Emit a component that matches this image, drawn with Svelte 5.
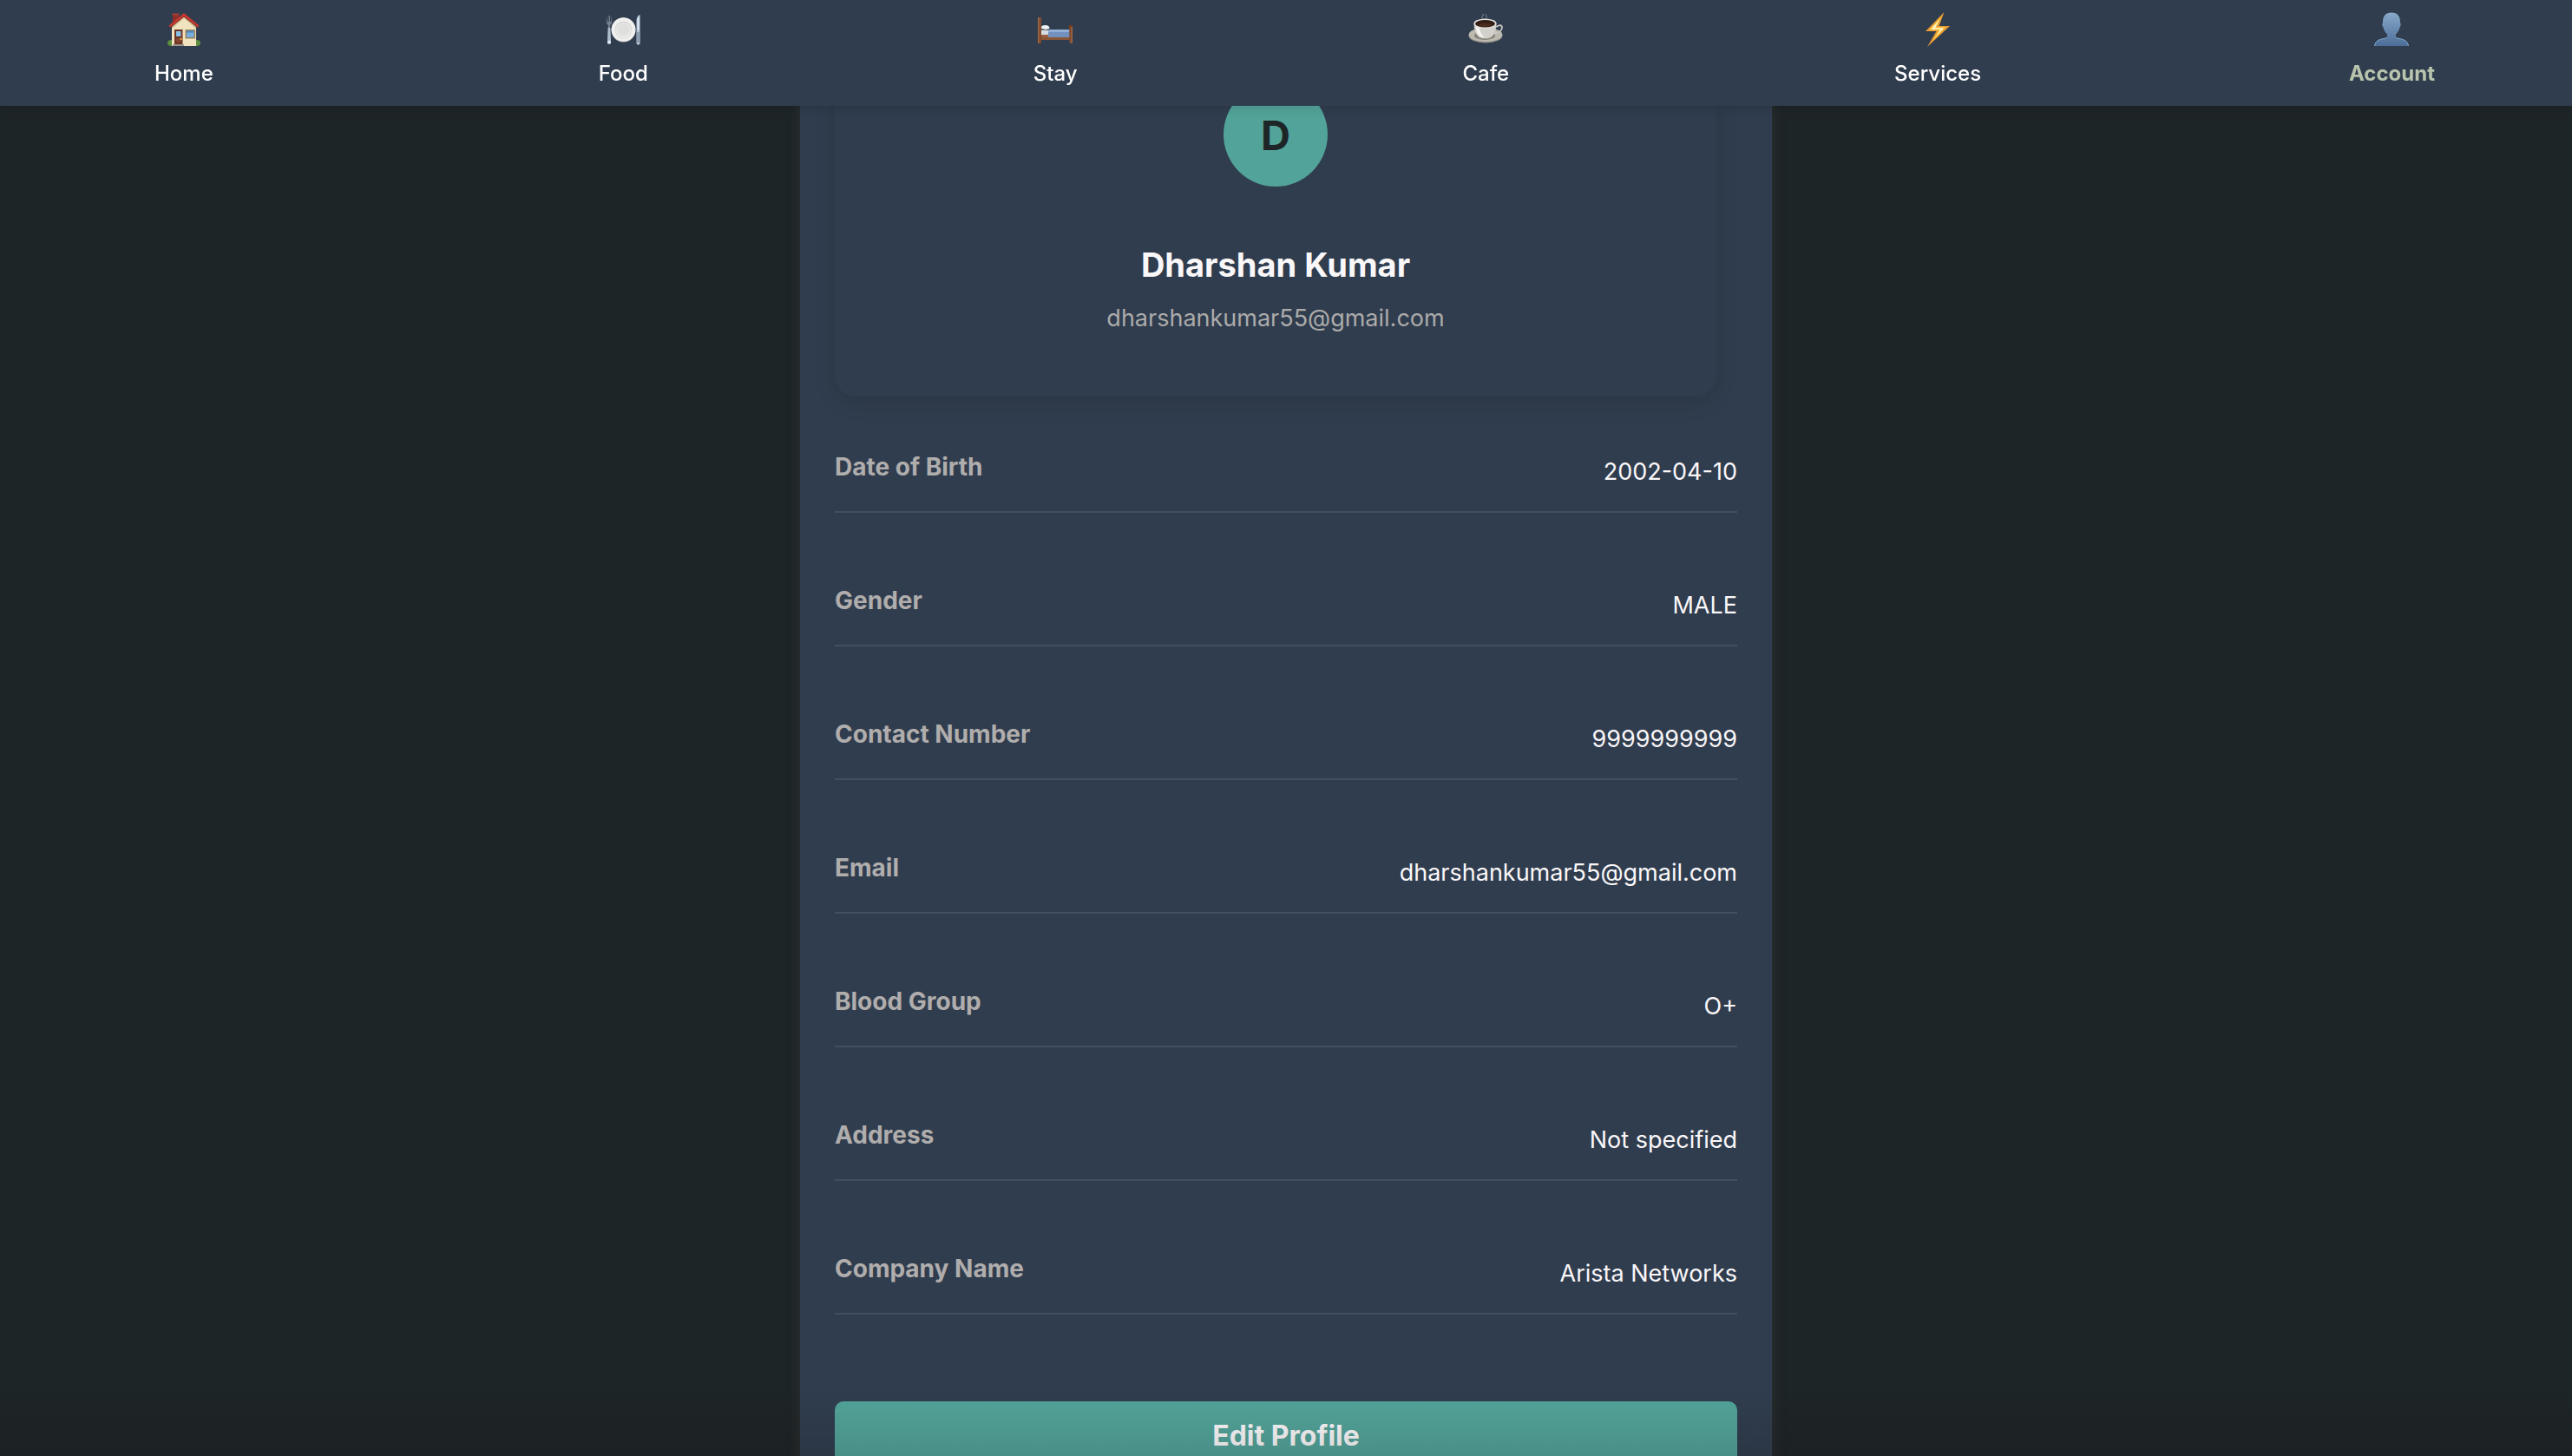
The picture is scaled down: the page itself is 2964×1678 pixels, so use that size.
<script>
  const nav = [
    { id: 'home', label: 'Home' },
    { id: 'food', label: 'Food' },
    { id: 'stay', label: 'Stay' },
    { id: 'cafe', label: 'Cafe' },
    { id: 'services', label: 'Services' },
    { id: 'account', label: 'Account', active: true }
  ];

  const user = { name: 'Dharshan Kumar', email: 'dharshankumar55@gmail.com' };

  const details = [
    ['Date of Birth', '2002-04-10'],
    ['Gender', 'MALE'],
    ['Contact Number', '9999999999'],
    ['Email', user.email],
    ['Blood Group', 'O+'],
    ['Address', 'Not specified'],
    ['Company Name', 'Arista Networks']
  ];
</script>

{#snippet icon(id)}
  <svg class="icon" viewBox="0 0 40 40" aria-hidden="true">
    {#if id === 'home'}
      <path d="M7 2h7v9l-7 6z" fill="#8f2f2a" />
      <path d="M6.500 1.500h8v2h-8z" fill="#a84038" />
      <ellipse cx="5.500" cy="35.500" rx="4.500" ry="3.500" fill="#5f8f3e" />
      <ellipse cx="34.500" cy="35.500" rx="4.500" ry="3.500" fill="#5f8f3e" />
      <path d="M6 17 20 4l14 13v22H6z" fill="#f1e3bf" />
      <path d="M6 17 20 4l14 13v2L20 7 6 19z" fill="#c9b68c" />
      <path d="M2.500 15.500 20 1l17.500 14.500-1.500 2L20 5 4 17.500z" fill="#c8382f" />
      <path d="M4 17.500 20 5l16 12.500" fill="none" stroke="#7c2620" stroke-width="1" />
      <path d="M7 37h13v2H7z" fill="#9b948a" />
      <path d="M9 20h9.500v17H9z" fill="#6e3423" />
      <path d="M11 22h5.500v6H11z" fill="#86bfe6" />
      <path d="M11 30h5.500v5H11z" fill="#84452f" />
      <circle cx="16.500" cy="31" r="1.200" fill="#e0a848" />
      <path d="M21.500 20H33v10.500H21.500z" fill="#9a8157" />
      <path d="M23 21.500h8.500v7.500H23z" fill="#74aee0" />
      <path d="M23 21.500h8.500v2H23z" fill="#4f83b8" />
    {:else if id === 'food'}
      <path d="M1 4v7q0 3 2 4l-1 20q0 2 2 2t2-2L5 15q2-1 2-4V4l-1 7H5V4H3.500v7H2z" fill="#73818e" />
      <path d="m2.700 18-.7 17q0 2 2 2t2-2l-.7-17z" fill="#aebdce" />
      <path d="M2.200 33h3.600v3H2.200z" fill="#e0eaf5" />
      <path d="M35.500 20V9q.5-5 4-6v33q0 1.500-2 1.500T35.500 36z" fill="#b5c6d6" />
      <path d="M36.500 20V9q.5-3 2-4v16z" fill="#dce8f2" />
      <path d="M36 23h3.500v12H36z" fill="#8b9cae" />
      <circle cx="20.500" cy="20.500" r="14" fill="#bfc1c4" />
      <circle cx="20.500" cy="20" r="13.800" fill="#efefee" />
      <circle cx="20.500" cy="20.500" r="9.800" fill="#cfd0d0" />
      <circle cx="20.500" cy="21" r="9.300" fill="#e7e7e5" />
      <circle cx="20.500" cy="20" r="7" fill="#dfdfdd" />
    {:else if id === 'stay'}
      <path d="M3 20h34v7H3z" fill="#6c3f27" />
      <path d="M3 27h34v5H3z" fill="#8a5636" />
      <path d="M3 26h10v3H3z" fill="#9c6040" />
      <path d="M3 21h11v5H3z" fill="#d2dde6" />
      <path d="M12 20h25v9H12z" fill="#7391be" />
      <path d="M12 20h25v3H12z" fill="#93aed4" />
      <path d="M3.500 19q0-4 5-4 5 0 5 4l-4 1.500H3.500z" fill="#eef2f5" />
      <path d="M4 18.500q5 2.500 9.500.5v1.500H4z" fill="#46525e" />
      <path d="M0 6h4v30H0z" fill="#7f4a2d" />
      <path d="M0 6h1.500v30H0z" fill="#9d6644" />
      <path d="M36 15h4v21h-3.500z" fill="#7f4a2d" />
      <path d="M38.500 15H40v21h-1.500z" fill="#9d6644" />
      <path d="M35.500 15H40v2h-4.500z" fill="#6d3c22" />
    {:else if id === 'cafe'}
      <path d="M17 8q-3-2 0-4M20 8q3-3-1-6M16 2l2 2" fill="none" stroke="#7d8791" stroke-width="1" />
      <ellipse cx="20" cy="27" rx="19.500" ry="8.500" fill="#96928a" />
      <ellipse cx="20" cy="26" rx="19.300" ry="8" fill="#bcb9b0" />
      <ellipse cx="19" cy="27" rx="12" ry="5" fill="#858178" />
      <path d="M32 17q6.500-4 7 .5 0 5.500-9 7" fill="none" stroke="#c9c7c1" stroke-width="1.800" />
      <path d="M6.500 13q0 11 6 16 7 3 14 0 6-5 6-16z" fill="#d2d0ca" />
      <path d="M8.500 16q1 9 5 12 3 1 5 1-5-5-6-12z" fill="#f4f3ef" />
      <ellipse cx="19.500" cy="13" rx="13" ry="5.500" fill="#e8e6e1" />
      <ellipse cx="19.500" cy="13.300" rx="11.500" ry="4.300" fill="#321c14" />
      <ellipse cx="19.500" cy="14.800" rx="8" ry="2.200" fill="#4a2c1f" />
    {:else if id === 'services'}
      <path d="M27.500 0 6 22h12.500L8 40l26-24H21.500z" fill="#e89a32" />
      <path d="M24 5.500 10.500 20.500h11.500l-8 12.500L29 17.500H18z" fill="#ffd75b" />
      <path d="M22 9 13 19.500h11l-6 8.500 8.500-9.500H16.500z" fill="#fffbe3" />
    {:else}
      <defs>
        <linearGradient id="bust" x1="0" y1="0" x2="0" y2="1">
          <stop offset="0" stop-color="#88a9c9" />
          <stop offset="1" stop-color="#4c6d98" />
        </linearGradient>
      </defs>
      <path
        d="M20 .5c7 0 10.500 4.500 10 12 1 0 1 3.500-.5 5-1 4-2.500 6-4.500 8v3.500c2 2.500 13.500.5 14.500 10H.5C1.500 29.500 13 31.500 15 29v-3.500c-2-2-3.500-4-4.500-8-1.500-1.500-1.500-5-.5-5C9.500 5 13 .5 20 .5z"
        fill="url(#bust)"
      />
      <path d="M.5 39C1.500 29.500 13 31.500 15 29M39.500 39C38.500 29.500 27 31.500 25 29" fill="none" stroke="#7fa6cc" />
    {/if}
  </svg>
{/snippet}

<div class="page">
  <nav class="topbar" aria-label="Main">
    {#each nav as item}
      <a href="#{item.id}" class="tab" class:active={item.active} aria-current={item.active ? 'page' : undefined}>
        {@render icon(item.id)}
        <span>{item.label}</span>
      </a>
    {/each}
  </nav>

  <main class="panel">
    <section class="card">
      <div class="avatar">D</div>
      <h1>{user.name}</h1>
      <p>{user.email}</p>
    </section>

    <dl class="details">
      {#each details as [label, value]}
        <div class="row">
          <dt>{label}</dt>
          <dd>{value}</dd>
        </div>
      {/each}
    </dl>

    <button type="button" class="edit">Edit Profile</button>
  </main>

  <div class="fade"></div>
</div>

<style>
  :global(body) {
    margin: 0;
    background: #1e2527;
  }

  .page {
    height: 100vh;
    overflow: hidden;
    background: #1e2527;
    color: #faf7f9;
    font-family: Inter, 'Liberation Sans', sans-serif;
    font-size: 27px;
    line-height: 40px;
  }

  .topbar {
    position: fixed;
    inset: 0 0 auto;
    z-index: 2;
    box-sizing: border-box;
    display: flex;
    justify-content: space-between;
    padding: 14px 158px 21px;
    background: #303d4e;
    box-shadow: 0 4px 12px rgba(0, 0, 0, 0.1);
  }

  .tab {
    display: flex;
    flex-direction: column;
    align-items: center;
    gap: 15px;
    padding: 0 20px;
    color: #ffffff;
    font-size: 24px;
    font-weight: 500;
    line-height: 32px;
    text-decoration: none;
  }

  .tab.active {
    padding: 0;
    color: #b8c4ae;
    font-weight: 700;
  }

  .icon {
    width: 40px;
    height: 40px;
  }

  .panel {
    box-sizing: border-box;
    width: 100%;
    max-width: 1120px;
    margin: 0 auto;
    padding: 16px 40px 80px;
    background: #303d4e;
    box-shadow: 0 0 14px rgba(72, 64, 64, 0.4);
  }

  .card {
    display: flex;
    flex-direction: column;
    align-items: center;
    margin-right: 24px;
    padding: 79px 40px 70px;
    border-radius: 24px;
    background: #303d4e;
    box-shadow: 0 8px 24px rgba(0, 0, 0, 0.1);
  }

  .avatar {
    display: flex;
    align-items: center;
    justify-content: center;
    box-sizing: border-box;
    width: 120px;
    height: 120px;
    padding-top: 2px;
    border-radius: 50%;
    background: #52a399;
    color: #1e2527;
    font-size: 47px;
    font-weight: 700;
  }

  h1 {
    margin: 66px 0 0;
    font-size: 38px;
    font-weight: 700;
    line-height: 48px;
  }

  p {
    margin: 18px 0 0;
    color: #acabab;
  }

  .details {
    display: grid;
    gap: 40px;
    margin: 20px 0 0;
  }

  .row {
    display: flex;
    align-items: flex-start;
    justify-content: space-between;
    padding: 41px 0 25px;
    border-bottom: 2px solid #434f5f;
  }

  dt {
    color: #b0adad;
    font-size: 28px;
    font-weight: 700;
  }

  dd {
    margin: 0;
    padding-top: 6px;
    text-align: right;
  }

  .edit {
    display: block;
    width: 100%;
    margin-top: 100px;
    padding: 20px 40px;
    border: 0;
    border-radius: 10px;
    background: #52a399;
    color: #faf7f9;
    font-family: inherit;
    font-size: 32px;
    font-weight: 700;
    line-height: 40px;
  }

  .fade {
    position: fixed;
    inset: auto 0 0;
    z-index: 1;
    height: 72px;
    background: linear-gradient(transparent, rgba(20, 16, 16, 0.13));
    pointer-events: none;
  }
</style>
